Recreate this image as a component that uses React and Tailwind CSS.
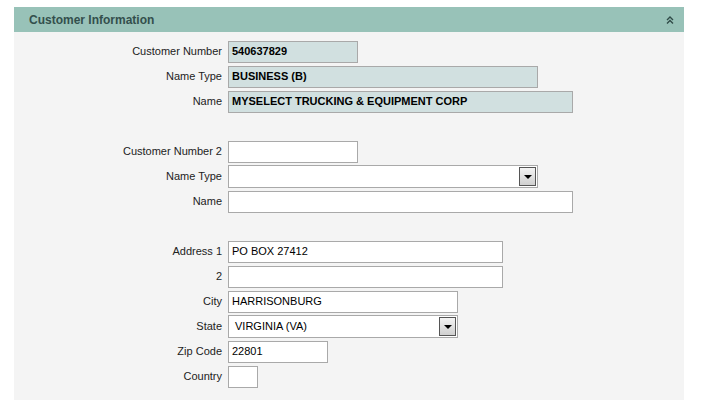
const font = { fontFamily: '"Liberation Sans", Arial, sans-serif' }

function Label({ children }) {
  return <div className="w-[214px] shrink-0 pr-[6px] text-right text-[11px] text-[#222]">{children}</div>
}

function Field({ label, value, width, readOnly, bold }) {
  return (
    <div className="flex h-[25px] items-center">
      <Label>{label}</Label>
      <div
        className={`flex h-[22px] items-center border border-[#a9a9a9] px-[3px] text-[11px] text-black ${
          readOnly ? 'bg-[#d1e0e0]' : 'bg-white'
        } ${bold ? 'font-bold' : ''}`}
        style={{ width }}
      >
        {value}
      </div>
    </div>
  )
}

function Select({ label, value, width }) {
  return (
    <div className="flex h-[25px] items-center">
      <Label>{label}</Label>
      <div
        className="flex h-[23px] items-center justify-between border border-[#a9a9a9] bg-white pl-[6px] pr-[1px] text-[11px] text-black"
        style={{ width }}
      >
        <span>{value}</span>
        <div className="flex h-[19px] w-[17px] items-center justify-center border border-[#555] bg-gradient-to-b from-[#f4f4f4] to-[#cfcfcf]">
          <div className="h-0 w-0 border-x-[4px] border-t-[4px] border-x-transparent border-t-black" />
        </div>
      </div>
    </div>
  )
}

const Gap = () => <div className="h-[25px]" />

export default function App() {
  return (
    <div className="h-[411px] w-[728px] bg-white pt-[7px] pl-[14px]" style={font}>
      <div className="w-[670px]">
        <div className="flex h-[25px] items-center justify-between bg-[#98c2b8] pl-[15px] pr-[10px]">
          <span className="text-[12px] font-bold text-[#334f4c]">Customer Information</span>
          <svg width="8" height="8" viewBox="0 0 8 8" fill="none" stroke="#2f4a47" strokeWidth="1.4">
            <path d="M1 4 L4 1 L7 4" />
            <path d="M1 7.5 L4 4.5 L7 7.5" />
          </svg>
        </div>
        <div className="h-[368px] bg-[#f4f4f4] pt-[7px]">
          <Field label="Customer Number" value="540637829" width={130} readOnly bold />
          <Field label="Name Type" value="BUSINESS (B)" width={310} readOnly bold />
          <Field label="Name" value="MYSELECT TRUCKING & EQUIPMENT CORP" width={345} readOnly bold />
          <Gap />
          <Field label="Customer Number 2" value="" width={130} />
          <Select label="Name Type" value="" width={310} />
          <Field label="Name" value="" width={345} />
          <Gap />
          <Field label="Address 1" value="PO BOX 27412" width={275} />
          <Field label="2" value="" width={275} />
          <Field label="City" value="HARRISONBURG" width={230} />
          <Select label="State" value="VIRGINIA (VA)" width={230} />
          <Field label="Zip Code" value="22801" width={100} />
          <Field label="Country" value="" width={30} />
        </div>
      </div>
    </div>
  )
}
